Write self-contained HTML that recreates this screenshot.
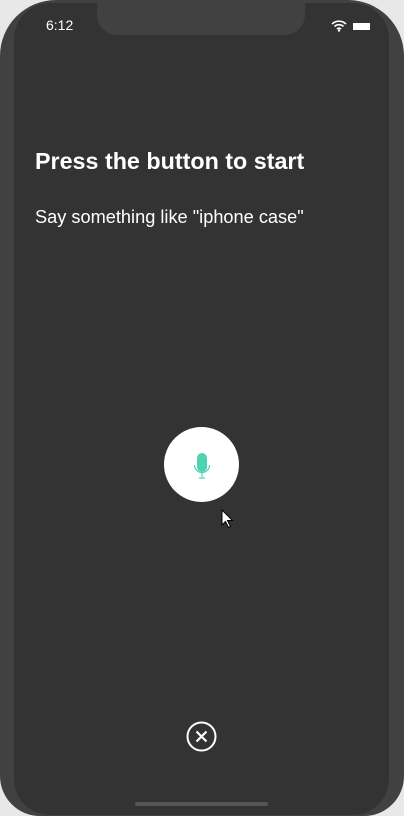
<!DOCTYPE html><html><head><style>
html,body{margin:0;width:404px;height:816px;overflow:hidden}
body{background:#e8e8e8;font-family:"Liberation Sans",sans-serif;position:relative}
.bz{position:absolute;left:0;top:0;width:404px;height:816px;background:#414141;border-radius:56px 56px 40px 40px}
.sc{position:absolute;left:14px;top:3px;width:375px;height:812px;background:#333;border-radius:36px;overflow:hidden}
.notch{position:absolute;left:83px;top:-3px;width:208px;height:35px;background:#414141;border-radius:0 0 20px 20px}
.t{position:absolute;color:#fff;white-space:nowrap}
</style></head><body>
<div class="bz"></div>
<div class="sc">
<div class="notch"></div>
<div class="t" style="left:32px;top:14px;font-size:14px">6:12</div>
<svg style="position:absolute;left:317px;top:16px" width="16" height="13" viewBox="0 0 16 13"><path d="M1 5a10 10 0 0 1 14 0M3.5 7.5a6.5 6.5 0 0 1 9 0M6 10a3 3 0 0 1 4 0" stroke="#fff" stroke-width="1.6" fill="none"/><circle cx="8" cy="11.5" r="1.2" fill="#fff"/></svg>
<div style="position:absolute;left:339px;top:20px;width:17px;height:7px;background:#fff"></div>
<div class="t" style="left:21px;top:145px;font-size:23.3px;font-weight:bold">Press the button to start</div>
<div class="t" style="left:21px;top:204px;font-size:18.2px">Say something like "iphone case"</div>
<div style="position:absolute;left:150px;top:424px;width:75px;height:75px;border-radius:50%;background:#fff"></div>
<svg style="position:absolute;left:176px;top:448px" width="24" height="30" viewBox="0 0 24 30"><rect x="7" y="2" width="10" height="19" rx="5" fill="#4fd2b2"/><path d="M4.5 14a7.5 7.5 0 0 0 15 0M12 22v4M9 27h6" stroke="#4fd2b2" stroke-width="1.2" fill="none"/></svg>
<svg style="position:absolute;left:207px;top:506px" width="14" height="20" viewBox="0 0 14 20"><path d="M1 1v15l3.5-3.5 3 6 2-1-3-6h5z" fill="#fff" stroke="#000" stroke-width="1"/></svg>
<svg style="position:absolute;left:172px;top:718px" width="31" height="31" viewBox="0 0 31 31"><circle cx="15.5" cy="15.5" r="14" stroke="#fff" stroke-width="2" fill="none"/><path d="M10.5 10.5l10 10M20.5 10.5l-10 10" stroke="#fff" stroke-width="2.2"/></svg>
<div style="position:absolute;left:121px;top:799px;width:133px;height:4px;border-radius:2px;background:#555"></div>
</div>
</body></html>
